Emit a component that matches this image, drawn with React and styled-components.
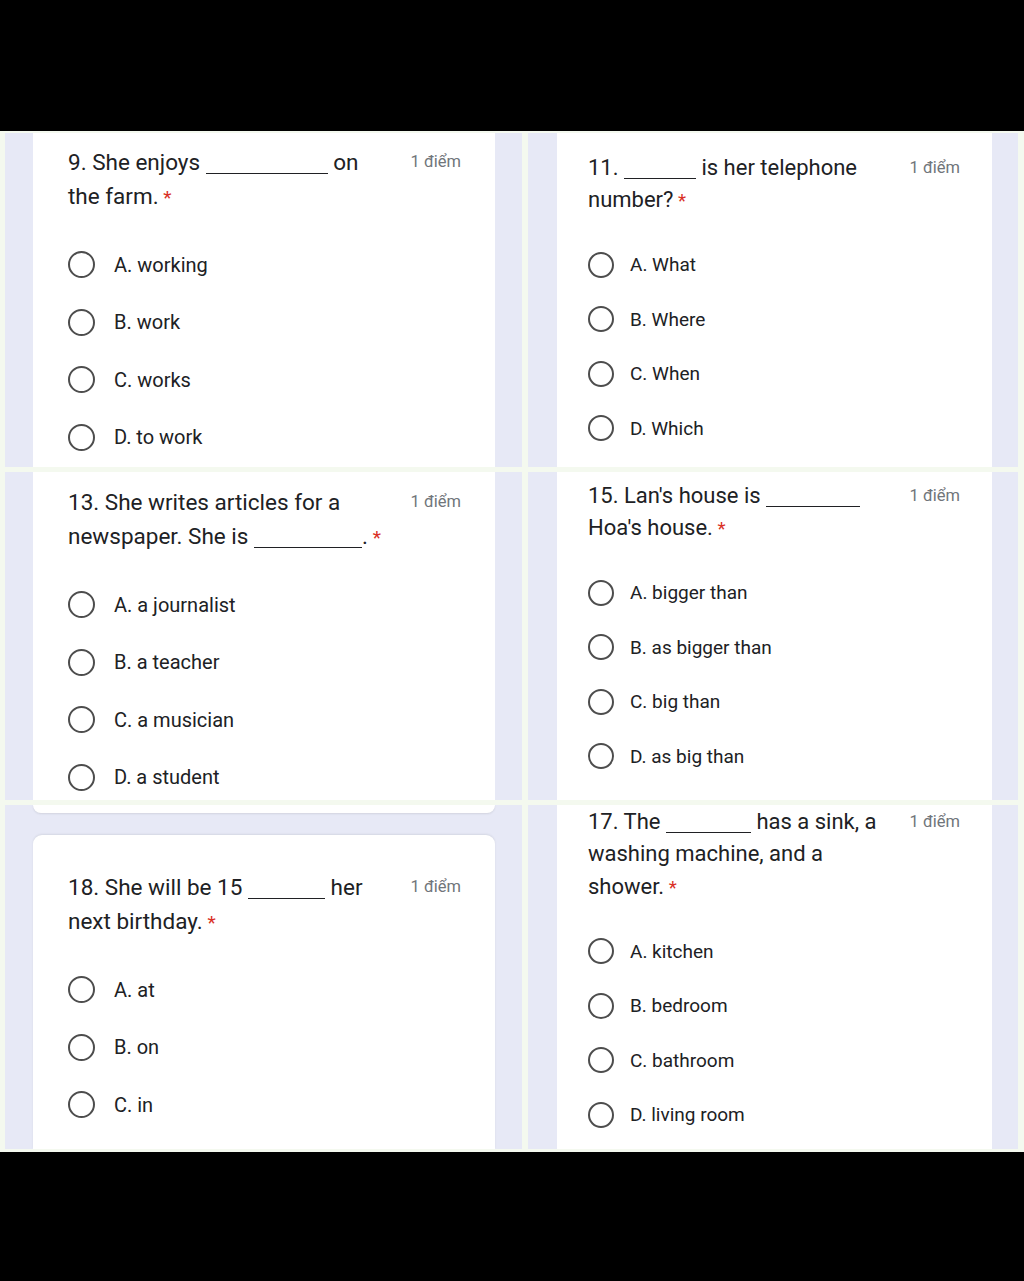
import React from "react";
import styled, { createGlobalStyle } from "styled-components";

const GlobalStyle = createGlobalStyle`
  html, body {
    margin: 0;
    padding: 0;
    background: #000;
  }
  body {
    font-family: Roboto, "Liberation Sans", Arial, sans-serif;
  }
`;

// sizes differ a little between the two screenshots of each column
const leftCol = {
  title: 22.5,
  lh: 34,
  opt: 20,
  row: 57.5,
  radio: 27,
  gap: 19,
  listTop: 21,
  padL: 35,
  padR: 34,
  sideL: 28,
  sideR: 27,
};

const rightCol = {
  title: 22,
  lh: 32.5,
  opt: 19,
  row: 54.5,
  radio: 26,
  gap: 16,
  listTop: 19.5,
  padL: 31,
  padR: 32,
  sideL: 29,
  sideR: 26,
};

const panels = [
  {
    col: leftCol,
    top: 12,
    lines: [["9. She enjoys ", { blank: 122 }, " on"], ["the farm."]],
    options: ["A. working", "B. work", "C. works", "D. to work"],
  },
  {
    col: rightCol,
    top: 18.75,
    lines: [["11. ", { blank: 72 }, " is her telephone"], ["number?"]],
    options: ["A. What", "B. Where", "C. When", "D. Which"],
  },
  {
    col: leftCol,
    top: 13,
    lines: [["13. She writes articles for a"], ["newspaper. She is ", { blank: 108 }, "."]],
    options: ["A. a journalist", "B. a teacher", "C. a musician", "D. a student"],
  },
  {
    col: rightCol,
    top: 7.75,
    lines: [["15. Lan's house is ", { blank: 94 }], ["Hoa's house."]],
    options: ["A. bigger than", "B. as bigger than", "C. big than", "D. as big than"],
  },
  {
    col: leftCol,
    top: 35,
    tail: true,
    lines: [["18. She will be 15 ", { blank: 77 }, " her"], ["next birthday."]],
    options: ["A. at", "B. on", "C. in"],
  },
  {
    col: rightCol,
    top: 0.75,
    lines: [
      ["17. The ", { blank: 85 }, " has a sink, a"],
      ["washing machine, and a"],
      ["shower."],
    ],
    options: ["A. kitchen", "B. bedroom", "C. bathroom", "D. living room"],
  },
];

export default function App() {
  return (
    <>
      <GlobalStyle />
      <Screen>
        <Collage>
          {panels.map((p, i) => (
            <Panel key={i} $m={p.col}>
              {p.tail && (
                <>
                  <CardEnd />
                  <CardGap />
                </>
              )}
              <Card $m={p.col} $top={p.top} $rounded={p.tail}>
                <Header>
                  <Title $m={p.col}>
                    {p.lines.map((line, j) => (
                      <Line key={j}>
                        {line.map((part, k) =>
                          typeof part === "string" ? (
                            <React.Fragment key={k}>{part}</React.Fragment>
                          ) : (
                            <Blank key={k} style={{ width: part.blank }} />
                          )
                        )}
                        {j === p.lines.length - 1 && <Star> *</Star>}
                      </Line>
                    ))}
                  </Title>
                  <Points $m={p.col}>1 điểm</Points>
                </Header>
                <Options $m={p.col}>
                  {p.options.map((o) => (
                    <Option key={o} $m={p.col}>
                      <Radio $m={p.col} />
                      <span>{o}</span>
                    </Option>
                  ))}
                </Options>
              </Card>
            </Panel>
          ))}
        </Collage>
      </Screen>
    </>
  );
}

const Screen = styled.div`
  width: 1024px;
  height: 1281px;
  background: #000;
  padding-top: 131px;
  box-sizing: border-box;
`;

const Collage = styled.div`
  display: grid;
  grid-template-columns: 517px 490px;
  grid-template-rows: 334px 328px 344px;
  column-gap: 6px;
  row-gap: 5px;
  padding: 2px 6px 3px 5px;
  background: #f4f9ef;
`;

const Panel = styled.div`
  background: #e7e9f6;
  overflow: hidden;
  display: flex;
  flex-direction: column;
  padding: 0 ${(p) => p.$m.sideR}px 0 ${(p) => p.$m.sideL}px;
`;

const CardEnd = styled.div`
  height: 8px;
  flex-shrink: 0;
  background: #fff;
  border-radius: 0 0 9px 9px;
  box-shadow: 0 1px 2px rgba(60, 64, 67, 0.12);
`;

const CardGap = styled.div`
  height: 22px;
  flex-shrink: 0;
`;

const Card = styled.div`
  flex: 1;
  background: #fff;
  padding: ${(p) => p.$top}px ${(p) => p.$m.padR}px 0 ${(p) => p.$m.padL}px;
  border-radius: ${(p) => (p.$rounded ? "9px 9px 0 0" : "0")};
  box-shadow: ${(p) => (p.$rounded ? "0 -1px 2px rgba(60, 64, 67, 0.1)" : "none")};
`;

const Header = styled.div`
  display: flex;
  justify-content: space-between;
  align-items: flex-start;
`;

const Title = styled.div`
  font-size: ${(p) => p.$m.title}px;
  line-height: ${(p) => p.$m.lh}px;
  color: #202124;
`;

const Line = styled.div`
  white-space: nowrap;
`;

const Blank = styled.span`
  display: inline-block;
  height: 1px;
  border-bottom: 1.5px solid #202124;
  margin-bottom: -4px;
`;

const Star = styled.span`
  color: #d93025;
  font-size: 0.85em;
`;

const Points = styled.div`
  font-size: 16.5px;
  line-height: ${(p) => p.$m.lh}px;
  color: #70757a;
  white-space: nowrap;
`;

const Options = styled.div`
  margin-top: ${(p) => p.$m.listTop}px;
  display: flex;
  flex-direction: column;
`;

const Option = styled.div`
  height: ${(p) => p.$m.row}px;
  display: flex;
  align-items: center;
  gap: ${(p) => p.$m.gap}px;
  font-size: ${(p) => p.$m.opt}px;
  color: #202124;
`;

const Radio = styled.span`
  width: ${(p) => p.$m.radio}px;
  height: ${(p) => p.$m.radio}px;
  box-sizing: border-box;
  border: 2.5px solid #4d4d4d;
  border-radius: 50%;
  flex-shrink: 0;
`;
